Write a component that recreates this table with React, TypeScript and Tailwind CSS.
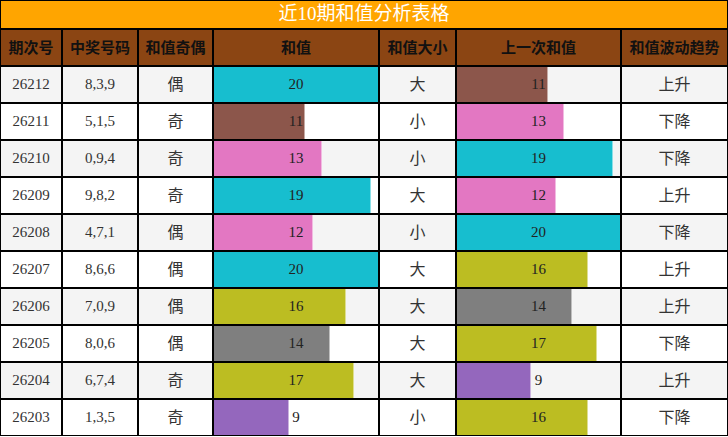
import React from 'react';

type Row = {
  issue: string;
  nums: string;
  parity: string;
  sum: number;
  size: string;
  prev: number;
  trend: string;
};

const rows: Row[] = [
  { issue: '26212', nums: '8,3,9', parity: '偶', sum: 20, size: '大', prev: 11, trend: '上升' },
  { issue: '26211', nums: '5,1,5', parity: '奇', sum: 11, size: '小', prev: 13, trend: '下降' },
  { issue: '26210', nums: '0,9,4', parity: '奇', sum: 13, size: '小', prev: 19, trend: '下降' },
  { issue: '26209', nums: '9,8,2', parity: '奇', sum: 19, size: '大', prev: 12, trend: '上升' },
  { issue: '26208', nums: '4,7,1', parity: '偶', sum: 12, size: '小', prev: 20, trend: '下降' },
  { issue: '26207', nums: '8,6,6', parity: '偶', sum: 20, size: '大', prev: 16, trend: '上升' },
  { issue: '26206', nums: '7,0,9', parity: '偶', sum: 16, size: '大', prev: 14, trend: '上升' },
  { issue: '26205', nums: '8,0,6', parity: '偶', sum: 14, size: '大', prev: 17, trend: '下降' },
  { issue: '26204', nums: '6,7,4', parity: '奇', sum: 17, size: '大', prev: 9, trend: '上升' },
  { issue: '26203', nums: '1,3,5', parity: '奇', sum: 9, size: '小', prev: 16, trend: '下降' },
];

const headers = ['期次号', '中奖号码', '和值奇偶', '和值', '和值大小', '上一次和值', '和值波动趋势'];

// colour per sum value, same palette as the chart tool
function barColor(v: number) {
  if (v >= 19) return '#17becf';
  if (v === 17 || v === 16) return '#bcbd22';
  if (v === 14) return '#7f7f7f';
  if (v === 13 || v === 12) return '#e377c2';
  if (v === 11) return '#8c564b';
  return '#9467bd';
}

const cell = 'border border-black h-[37px] flex items-center justify-center';
const grid = 'grid grid-cols-[62px_76px_75px_166px_77px_165px_107px]';

function BarCell({ value }: { value: number }) {
  return (
    <div className="border border-black h-[37px] relative flex items-center justify-center overflow-hidden">
      <div
        className="absolute left-0 top-0 bottom-0 border-r border-white/50"
        style={{ width: `calc(${(value / 20) * 100}% + 1px)`, backgroundColor: barColor(value) }}
      />
      <span className="relative text-[15px] text-[#222]">{value}</span>
    </div>
  );
}

export default function App() {
  return (
    <div className="w-[728px] bg-white text-[#333]" style={{ fontFamily: '"Liberation Serif", "Noto Sans CJK SC", serif' }}>
      <div className="border border-black h-[29px] bg-[#ffa500] flex items-center justify-center text-white text-[19px]">
        近10期和值分析表格
      </div>
      <div className={`${grid} bg-[#8b4513]`}>
        {headers.map((h) => (
          <div
            key={h}
            className={`${cell} font-bold text-[15px] text-[#111]`}
            style={{ fontFamily: '"Noto Sans CJK SC", sans-serif' }}
          >
            {h}
          </div>
        ))}
      </div>
      {rows.map((r, i) => (
        <div key={r.issue} className={`${grid} ${i % 2 === 0 ? 'bg-[#f4f4f4]' : 'bg-white'}`}>
          <div className={`${cell} text-[15px]`}>{r.issue}</div>
          <div className={`${cell} text-[15px]`}>{r.nums}</div>
          <div className={`${cell} text-[16px]`}>{r.parity}</div>
          <BarCell value={r.sum} />
          <div className={`${cell} text-[16px]`}>{r.size}</div>
          <BarCell value={r.prev} />
          <div className={`${cell} text-[16px]`}>{r.trend}</div>
        </div>
      ))}
    </div>
  );
}
